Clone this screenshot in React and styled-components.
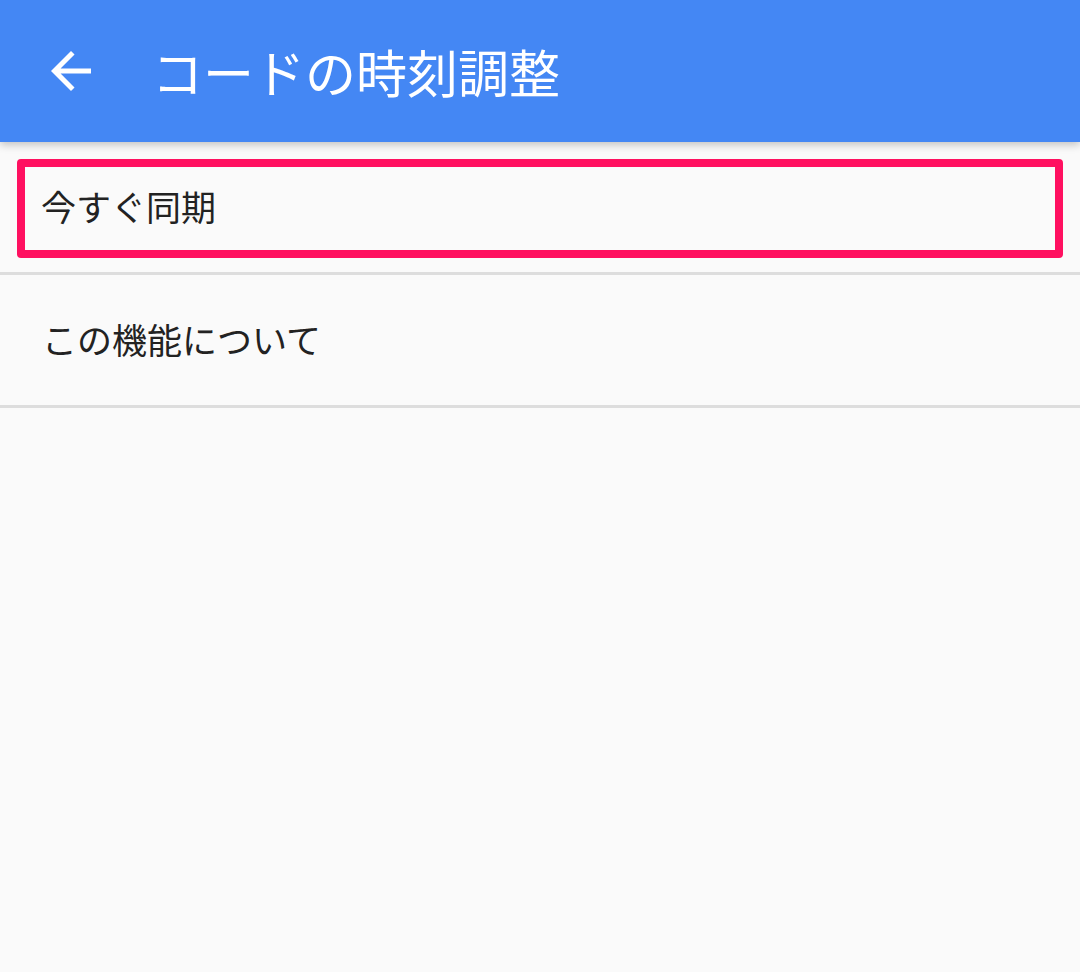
import React from "react";
import styled, { createGlobalStyle } from "styled-components";

const GlobalStyle = createGlobalStyle`
  html, body {
    margin: 0;
    padding: 0;
    background: #fafafa;
    font-family: "Noto Sans CJK JP", "Noto Sans", sans-serif;
  }
`;

function BackIcon() {
  return (
    <svg width="60" height="60" viewBox="0 0 24 24" fill="#ffffff">
      <path d="M20 11H7.83l5.59-5.59L12 4l-8 8 8 8 1.41-1.41L7.83 13H20v-2z" />
    </svg>
  );
}

function App() {
  return (
    <Page>
      <GlobalStyle />
      <AppBar>
        <IconButton>
          <BackIcon />
        </IconButton>
        <Title>コードの時刻調整</Title>
      </AppBar>
      <List>
        <Row>
          <Highlight>
            <ItemText>今すぐ同期</ItemText>
          </Highlight>
        </Row>
        <Row plain>
          <ItemText>この機能について</ItemText>
        </Row>
      </List>
    </Page>
  );
}

export default App;

const Page = styled.div`
  width: 1080px;
  min-height: 972px;
  background: #fafafa;
`;
const AppBar = styled.header`
  position: relative;
  z-index: 1;
  height: 142px;
  display: flex;
  align-items: center;
  padding-left: 41px;
  background: #4487f4;
  box-shadow: 0 3px 8px rgba(0, 0, 0, 0.22);
`;
const IconButton = styled.div`
  width: 60px;
  height: 60px;
  display: flex;
  align-items: center;
  justify-content: center;
`;
const Title = styled.h1`
  margin: 0 0 0 51px;
  color: #ffffff;
  font-size: 51px;
  font-weight: 400;
  line-height: 1;
`;
const List = styled.div`
  display: flex;
  flex-direction: column;
`;
const Row = styled.div`
  box-sizing: border-box;
  height: 133px;
  display: flex;
  align-items: center;
  padding: ${(p) => (p.plain ? "0 0 3px 42px" : "0 17px")};
  border-bottom: 3px solid #dddddd;
`;
const Highlight = styled.div`
  box-sizing: border-box;
  width: 100%;
  height: 99px;
  display: flex;
  align-items: center;
  padding: 0 0 5px 16px;
  border: 8px solid #ff1060;
  border-radius: 4px;
  margin-top: 2px;
`;
const ItemText = styled.span`
  color: #222222;
  font-size: 35px;
  line-height: 1;
`;
